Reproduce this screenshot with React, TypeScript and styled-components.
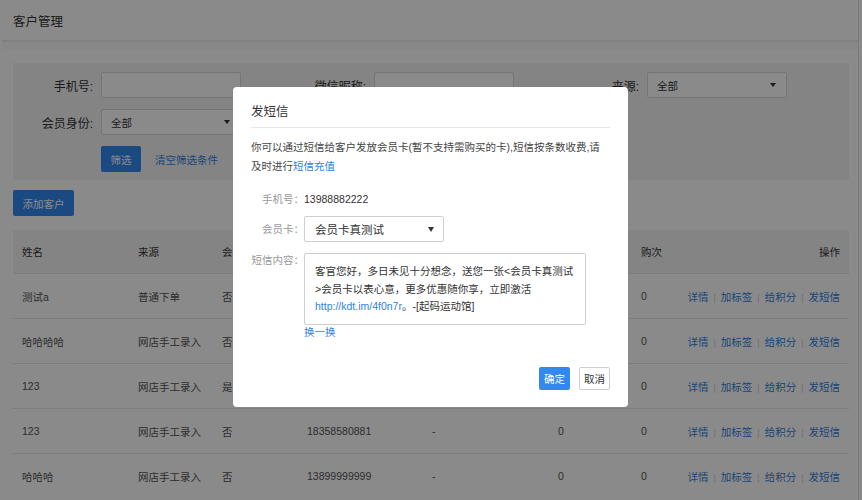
import React from "react";
import styled, { createGlobalStyle } from "styled-components";

// GLOBAL //
const GlobalStyle = createGlobalStyle`
  html, body { margin: 0; padding: 0; background: #fff; }
  body {
    font-family: "Liberation Sans", "Noto Sans CJK SC", sans-serif;
    font-size: 10.5px;
    color: #333;
  }
  * { box-sizing: border-box; }
`;

// DATA //
type Customer = {
  name: string;
  source: string;
  member: string;
  phone: string;
  tag: string;
  points: string;
  buys: string;
};

const customers: Customer[] = [
  { name: "测试a", source: "普通下单", member: "否", phone: "13988882222", tag: "-", points: "0", buys: "0" },
  { name: "哈哈哈哈", source: "网店手工录入", member: "否", phone: "13566668888", tag: "-", points: "0", buys: "0" },
  { name: "123", source: "网店手工录入", member: "是", phone: "13800001111", tag: "-", points: "0", buys: "0" },
  { name: "123", source: "网店手工录入", member: "否", phone: "18358580881", tag: "-", points: "0", buys: "0" },
  { name: "哈哈哈", source: "网店手工录入", member: "否", phone: "13899999999", tag: "-", points: "0", buys: "0" },
];

const actions = ["详情", "加标签", "给积分", "发短信"];

const App = () => {
  return (
    <Page>
      <GlobalStyle />
      <Frame>
        <TopBar>客户管理</TopBar>
        <TopStrip />
        <Content>
          <FilterPanel>
            <FilterRow>
              <Field>
                <FieldLabel>手机号:</FieldLabel>
                <TextBox />
              </Field>
              <Field>
                <FieldLabel>微信昵称:</FieldLabel>
                <TextBox />
              </Field>
              <Field>
                <FieldLabel>来源:</FieldLabel>
                <SelectBox>
                  全部
                  <Caret />
                </SelectBox>
              </Field>
            </FilterRow>
            <FilterRow>
              <Field>
                <FieldLabel>会员身份:</FieldLabel>
                <SelectBox>
                  全部
                  <Caret />
                </SelectBox>
              </Field>
            </FilterRow>
            <FilterActions>
              <PrimaryButton $w={40} $h={26}>筛选</PrimaryButton>
              <TextLink>清空筛选条件</TextLink>
            </FilterActions>
          </FilterPanel>

          <PrimaryButton $w={61} $h={26} style={{ marginTop: 10 }}>添加客户</PrimaryButton>

          <Table>
            <HeadRow>
              <Cell>姓名</Cell>
              <Cell>来源</Cell>
              <Cell>会员</Cell>
              <Cell>手机号</Cell>
              <Cell>标签</Cell>
              <Cell>积分</Cell>
              <Cell>购次</Cell>
              <Cell $right>操作</Cell>
            </HeadRow>
            {customers.map((c, i) => (
              <BodyRow key={i}>
                <Cell>{c.name}</Cell>
                <Cell>{c.source}</Cell>
                <Cell>{c.member}</Cell>
                <Cell>{c.phone}</Cell>
                <Cell>{c.tag}</Cell>
                <Cell>{c.points}</Cell>
                <Cell>{c.buys}</Cell>
                <Cell $right>
                  {actions.map((a, j) => (
                    <React.Fragment key={a}>
                      {j > 0 && <Sep>|</Sep>}
                      <ActionLink>{a}</ActionLink>
                    </React.Fragment>
                  ))}
                </Cell>
              </BodyRow>
            ))}
          </Table>
        </Content>
      </Frame>

      {/* MODAL */}
      <Overlay />
      <Dialog>
        <DialogTitle>发短信</DialogTitle>
        <Intro>
          你可以通过短信给客户发放会员卡(暂不支持需购买的卡),短信按条数收费,请
          <br />
          及时进行<TextLink>短信充值</TextLink>
        </Intro>
        <FormRow $h={26} style={{ marginTop: 10 }}>
          <FormLabel>手机号：</FormLabel>
          <FormValue>13988882222</FormValue>
        </FormRow>
        <FormRow $h={26} style={{ marginTop: 4 }}>
          <FormLabel>会员卡：</FormLabel>
          <CardSelect>
            会员卡真测试
            <Caret $big />
          </CardSelect>
        </FormRow>
        <FormRow $top style={{ marginTop: 11 }}>
          <FormLabel>短信内容：</FormLabel>
          <div>
            <MessageBox>
              <MsgLine>客官您好，多日未见十分想念，送您一张&lt;会员卡真测试</MsgLine>
              <MsgLine>&gt;会员卡以表心意，更多优惠随你享，立即激活</MsgLine>
              <MsgLine>
                <TextLink>http://kdt.im/4f0n7r</TextLink>。-[起码运动馆]
              </MsgLine>
            </MessageBox>
            <Refresh>换一换</Refresh>
          </div>
        </FormRow>
        <DialogFooter>
          <PrimaryButton $w={31} $h={23}>确定</PrimaryButton>
          <GhostButton>取消</GhostButton>
        </DialogFooter>
      </Dialog>
    </Page>
  );
};

// STYLED COMPONENTS //
const Page = styled.div`
  position: relative;
  width: 862px;
  height: 500px;
  overflow: hidden;
  background: #fff;
`;

const Frame = styled.div`
  margin-left: 2px;
  width: 857px;
  height: 500px;
  background: #fff;
  border-right: 1px solid #e4e4e4;
`;

const TopBar = styled.div`
  height: 42px;
  display: flex;
  align-items: center;
  padding-left: 11px;
  font-size: 12.5px;
  color: #333;
  background: #fff;
  border-bottom: 2px solid #ededed;
`;

const TopStrip = styled.div`
  height: 8px;
  background: #fbfbfb;
`;

const Content = styled.div`
  padding: 13px 9px 0 11px;
  background: #fff;
`;

const FilterPanel = styled.div`
  display: flex;
  flex-direction: column;
  gap: 11px;
  padding: 9px 0 8px;
  background: #f4f4f4;
`;

const FilterRow = styled.div`
  display: flex;
  gap: 45px;
`;

const Field = styled.div`
  display: flex;
  align-items: center;
  gap: 8px;
`;

const FieldLabel = styled.div`
  width: 80px;
  text-align: right;
  font-size: 12px;
  color: #333;
`;

const TextBox = styled.div`
  width: 140px;
  height: 26px;
  background: #fff;
  border: 1px solid #d9d9d9;
  border-radius: 2px;
`;

const SelectBox = styled(TextBox)`
  display: flex;
  align-items: center;
  justify-content: space-between;
  padding: 0 10px 0 9px;
  font-size: 10.5px;
  color: #333;
`;

const Caret = styled.span<{ $big?: boolean }>`
  width: 0;
  height: 0;
  border-left: ${(p) => (p.$big ? 3.5 : 3)}px solid transparent;
  border-right: ${(p) => (p.$big ? 3.5 : 3)}px solid transparent;
  border-top: ${(p) => (p.$big ? 5 : 4)}px solid #333;
`;

const FilterActions = styled.div`
  display: flex;
  align-items: center;
  gap: 14px;
  margin-left: 88px;
`;

const PrimaryButton = styled.div<{ $w: number; $h: number }>`
  width: ${(p) => p.$w}px;
  height: ${(p) => p.$h}px;
  display: flex;
  align-items: center;
  justify-content: center;
  background: #3388ee;
  color: #fff;
  font-size: 10.5px;
  border-radius: 2px;
`;

const GhostButton = styled.div`
  width: 31px;
  height: 23px;
  display: flex;
  align-items: center;
  justify-content: center;
  background: #fff;
  color: #333;
  font-size: 10.5px;
  border: 1px solid #cfcfcf;
  border-radius: 2px;
`;

const TextLink = styled.span`
  color: #2f80e0;
  font-size: 10.5px;
`;

const Table = styled.div`
  margin-top: 14px;
`;

const columns = "116px 84px 85px 125px 126px 83px 1fr 1fr";

const HeadRow = styled.div`
  display: grid;
  grid-template-columns: ${columns};
  height: 43px;
  align-items: center;
  background: #f4f4f4;
  color: #333;
`;

const BodyRow = styled.div`
  display: grid;
  grid-template-columns: ${columns};
  height: 45px;
  align-items: center;
  border-top: 1px solid #e8e8e8;
  color: #555;
`;

const Cell = styled.div<{ $right?: boolean }>`
  padding: 0 9px;
  white-space: nowrap;
  text-align: ${(p) => (p.$right ? "right" : "left")};
`;

const ActionLink = styled.span`
  color: #2f80e0;
`;

const Sep = styled.span`
  color: #d0d0d0;
  margin: 0 5px;
  font-size: 9px;
`;

const Overlay = styled.div`
  position: absolute;
  inset: 0;
  background: rgba(0, 0, 0, 0.46);
`;

const Dialog = styled.div`
  position: absolute;
  left: 233px;
  top: 87px;
  width: 395px;
  height: 320px;
  padding: 0 18px;
  background: #fff;
  border-radius: 4px;
`;

const DialogTitle = styled.div`
  padding: 16px 0 6px;
  line-height: 18px;
  font-size: 12.5px;
  color: #333;
  border-bottom: 1px solid #e8e8e8;
`;

const Intro = styled.div`
  margin-top: 10px;
  line-height: 19px;
  color: #444;
  white-space: nowrap;
`;

const FormRow = styled.div<{ $h?: number; $top?: boolean }>`
  display: flex;
  align-items: ${(p) => (p.$top ? "flex-start" : "center")};
  height: ${(p) => (p.$h ? `${p.$h}px` : "auto")};
`;

const FormLabel = styled.div`
  width: 53px;
  text-align: right;
  color: #999;
  white-space: nowrap;
  line-height: 15px;
`;

const FormValue = styled.div`
  color: #333;
`;

const CardSelect = styled.div`
  width: 140px;
  height: 26px;
  display: flex;
  align-items: center;
  justify-content: space-between;
  padding: 0 9px 0 10px;
  border: 1px solid #cfcfcf;
  border-radius: 2px;
  font-size: 11.5px;
  color: #333;
`;

const MessageBox = styled.div`
  width: 282px;
  height: 72px;
  padding: 9px 10px 0;
  border: 1px solid #cfcfcf;
  border-radius: 2px;
  color: #333;
`;

const MsgLine = styled.div`
  line-height: 17.5px;
  white-space: nowrap;
`;

const Refresh = styled(TextLink)`
  display: block;
  line-height: 14px;
`;

const DialogFooter = styled.div`
  display: flex;
  justify-content: flex-end;
  gap: 9px;
  margin-top: 28px;
`;

export default App;
